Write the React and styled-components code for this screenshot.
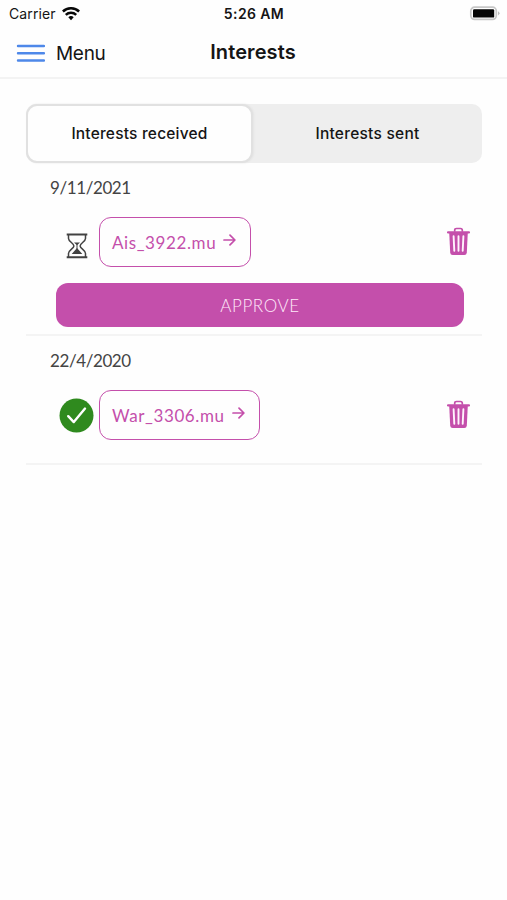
import React from 'react';
import styled, { createGlobalStyle } from 'styled-components';

const accent = '#c44fab';

const GlobalStyle = createGlobalStyle`
  * { box-sizing: border-box; }
  body { margin: 0; background: #fefefe; color: #151515; font-family: Inter, "Liberation Sans", sans-serif; }
  button { font: inherit; color: inherit; border: 0; padding: 0; background: none; cursor: pointer; }
  svg { display: block; flex: none; }
`;

const Screen = styled.div`
  width: 507px;
  height: 900px;
  overflow: hidden;
  background: #fefefe;
`;

const StatusBar = styled.header`
  display: grid;
  grid-template-columns: 1fr auto 1fr;
  align-items: center;
  height: 27px;
  padding: 0 7px 0 9px;
  font-size: 14px;
  line-height: 27px;
`;

const Carrier = styled.div`
  display: flex;
  align-items: center;
  gap: 6px;
  letter-spacing: 0.12px;
`;

const Clock = styled.div`
  margin-left: -1px;
  font-weight: 600;
  letter-spacing: 0.4px;
`;

const Power = styled.div`
  display: flex;
  justify-content: flex-end;
`;

const NavBar = styled.nav`
  display: grid;
  grid-template-columns: 1fr auto 1fr;
  height: 52px;
  padding: 0 17px 0 16px;
  border-bottom: 2px solid #f3f3f3;
`;

const MenuButton = styled.button`
  display: flex;
  align-items: center;
  gap: 11px;
  padding-top: 1px;
  font-size: 19px;
  letter-spacing: -0.3px;
`;

const Title = styled.h1`
  margin: 0;
  font-size: 20px;
  font-weight: 600;
  line-height: 51px;
  letter-spacing: 0.1px;
`;

const Content = styled.main`
  padding: 25px 25px 0 26px;
`;

const Segments = styled.div`
  display: grid;
  grid-template-columns: 227px 1fr;
  height: 59px;
  border-radius: 10px;
  background: #eeeeee;
`;

const Segment = styled.button`
  border: 2px solid ${(p) => (p.$active ? '#e1e1e1' : 'transparent')};
  border-radius: 11px;
  background: ${(p) => (p.$active ? '#fefefe' : 'transparent')};
  box-shadow: ${(p) => (p.$active ? '1px 0 2px #e4e4e4' : 'none')};
  font-size: 15.5px;
  font-weight: 550;
  letter-spacing: ${(p) => p.$tracking}px;
`;

const Interest = styled.section`
  height: ${(p) => p.$height}px;
  padding: 11px 12px 0 24px;
  border-bottom: 2px solid #f4f4f4;
`;

const DateLabel = styled.time`
  display: block;
  height: 28px;
  line-height: 28px;
  color: #444;
  font-family: Lato, sans-serif;
  font-size: 17px;
  letter-spacing: -0.4px;
`;

const InterestRow = styled.div`
  display: flex;
  align-items: center;
  height: 50px;
  margin-top: 15px;
  padding-left: 9px;
`;

const Status = styled.div`
  display: flex;
  justify-content: center;
  width: 35px;
  margin-right: 5px;
  padding-top: ${(p) => (p.$pending ? 8 : 0)}px;
`;

const Profile = styled.button`
  display: flex;
  align-items: center;
  justify-content: space-between;
  width: ${(p) => p.$width}px;
  height: 50px;
  padding: 0 14px 0 12px;
  border: 1.5px solid ${accent};
  border-radius: 12px;
  color: ${accent};
  font-family: Lato, sans-serif;
  font-size: 17px;
  letter-spacing: 0.6px;
  svg { margin-bottom: 5px; }
`;

const DeleteButton = styled.button`
  margin: -1px 0 0 auto;
`;

const Approve = styled.button`
  display: block;
  width: 408px;
  height: 44px;
  margin: 16px 0 0 6px;
  border-radius: 12px;
  background: ${accent};
  color: #ffeafa;
  font-family: Lato, sans-serif;
  font-size: 17px;
  font-weight: 300;
  letter-spacing: 0.6px;
`;

const Wifi = () => (
  <svg width="18" height="14" viewBox="0 0 18 14" fill="none" stroke="#080808" strokeWidth="2.5">
    <path d="M.9 4.5a11.7 11.7 0 0 1 16.2 0M3.8 7.8a7.6 7.6 0 0 1 10.4 0" />
    <path d="M6.3 10.3a4.1 4.1 0 0 1 5.4 0L9 13.2Z" fill="#080808" stroke="none" />
  </svg>
);

const Battery = () => (
  <svg width="31" height="15" viewBox="0 0 31 15">
    <rect x="1.8" y="1.2" width="25.5" height="12.2" rx="3.8" fill="#fff" stroke="#c7c7c7" strokeWidth="1.7" />
    <rect x="4" y="3.2" width="21.2" height="8.4" rx="1.2" fill="#050505" />
    <path d="M29 5.2q3 2.1 0 4.3Z" fill="#bdbdbd" />
  </svg>
);

const Hamburger = () => (
  <svg width="29" height="19" viewBox="0 0 29 19" stroke="#4e88e9" strokeWidth="2.4" strokeLinecap="round">
    <path d="M2 2h26M2 9.2h26M2 16.5h26" />
  </svg>
);

const Hourglass = () => (
  <svg width="22" height="26" viewBox="0 0 22 26" fill="none" stroke="#424242">
    <path d="M.7 1.5h20.6M.7 24.2h20.6" strokeWidth="2" />
    <path d="M2.5 2v3.5c0 3.1 5.4 4.8 5.4 7.4S2.5 17 2.5 20.5V24M19.5 2v3.5c0 3.1-5.4 4.8-5.4 7.4s5.4 4.1 5.4 7.6V24" strokeWidth="1.5" />
    <path d="M8 9.6h6L11 12.3ZM11 15l5.3 5.9H5.7Z" fill="#424242" stroke="none" />
    <path d="M11 11v5" strokeWidth="1" />
  </svg>
);

const Check = () => (
  <svg width="35" height="35" viewBox="0 0 35 35" fill="none">
    <circle cx="17.5" cy="17.5" r="17" fill="#2f8a1e" />
    <path d="m9.2 18.2 5.6 5.9L26 10.6" stroke="#fff" strokeWidth="2.4" strokeLinecap="round" strokeLinejoin="round" />
  </svg>
);

const Arrow = () => (
  <svg width="13" height="12" viewBox="0 0 13 12" fill="none" stroke={accent} strokeWidth="1.7" strokeLinecap="round" strokeLinejoin="round">
    <path d="M1 6h10.7M7 1.1 11.9 6 7 10.9" />
  </svg>
);

const Trash = () => (
  <svg width="23" height="29" viewBox="0 0 23 29" fill="none">
    <path d="M7.7 4.8V3.2q0-1.7 1.8-1.7h4q1.8 0 1.8 1.7v1.6" stroke={accent} strokeWidth="1.7" />
    <path d="M1 5.4h21" stroke={accent} strokeWidth="2.1" strokeLinecap="round" />
    <path d="M2.2 5.5h18.6l-1 20.2q-.2 2.4-2.5 2.4H5.7q-2.3 0-2.5-2.4Z" fill={accent} />
    <path d="m6.6 9.2.7 14.6M11.5 9.2v14.6M16.4 9.2l-.7 14.6" stroke="#fff3fc" strokeWidth="1.9" strokeLinecap="round" />
  </svg>
);

const interests = [
  { date: '9/11/2021', name: 'Ais_3922.mu', width: 152, height: 173, pending: true },
  { date: '22/4/2020', name: 'War_3306.mu', width: 161, height: 129, pending: false },
];

export default function App() {
  return (
    <Screen>
      <GlobalStyle />
      <StatusBar>
        <Carrier>Carrier <Wifi /></Carrier>
        <Clock>5:26 AM</Clock>
        <Power><Battery /></Power>
      </StatusBar>
      <NavBar>
        <MenuButton><Hamburger />Menu</MenuButton>
        <Title>Interests</Title>
      </NavBar>
      <Content>
        <Segments>
          <Segment $active $tracking={0.2}>Interests received</Segment>
          <Segment $tracking={0.25}>Interests sent</Segment>
        </Segments>
        {interests.map((item) => (
          <Interest key={item.name} $height={item.height}>
            <DateLabel>{item.date}</DateLabel>
            <InterestRow>
              <Status $pending={item.pending}>{item.pending ? <Hourglass /> : <Check />}</Status>
              <Profile $width={item.width}>{item.name}<Arrow /></Profile>
              <DeleteButton aria-label={`Delete ${item.name}`}><Trash /></DeleteButton>
            </InterestRow>
            {item.pending && <Approve>APPROVE</Approve>}
          </Interest>
        ))}
      </Content>
    </Screen>
  );
}
